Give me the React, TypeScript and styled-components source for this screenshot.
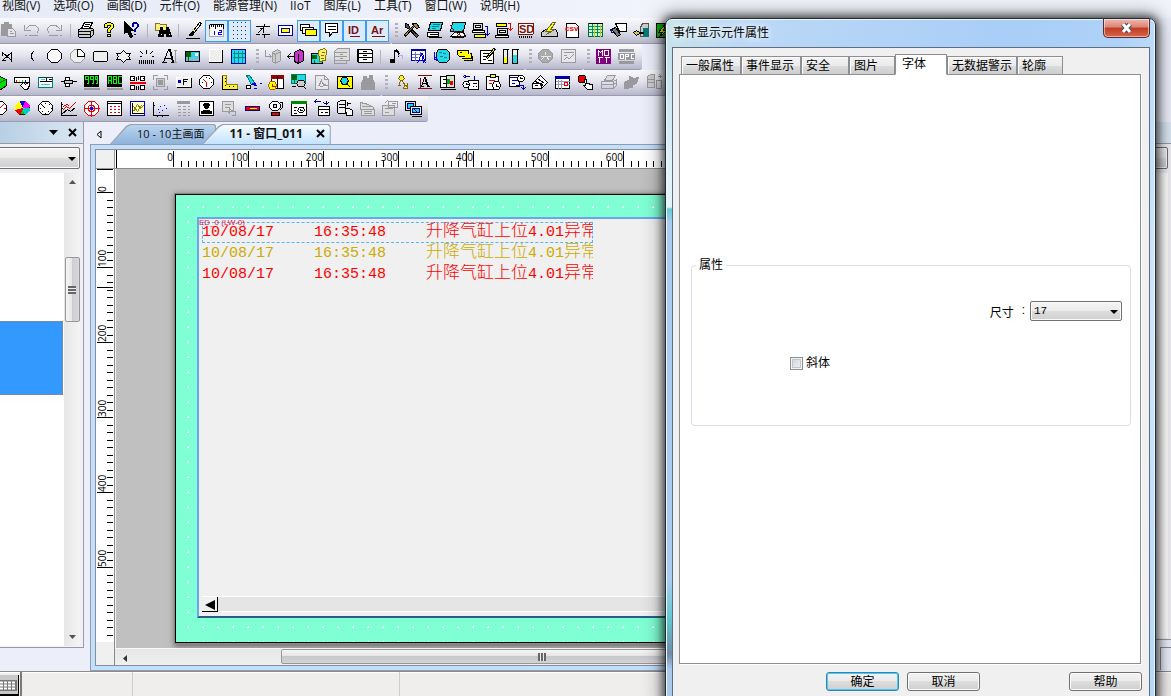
import React from "react";
import styled, { createGlobalStyle, css } from "styled-components";

const ui = `"Open Sans", "Noto Sans CJK SC", sans-serif`;
const dialogFont = `"Liberation Sans", "Noto Sans CJK SC", sans-serif`;

const Global = createGlobalStyle`
  *, *::before, *::after { box-sizing: border-box; }
  body { margin: 0; background: #eceffa; font-family: ${ui}; font-size: 12px; color: #111; }
  button, select, input { font: inherit; color: inherit; margin: 0; padding: 0; }
  button { border: 0; background: none; }
`;

/* ---------- icon drawing ---------- */

// path, fill, stroke (defaults to the fill), dash pattern
type Shape = [string, string, string?, string?];
// text, x, baseline, size, colour, weight
type Glyph = [string, number, number, number, string, number?];
interface Drawing { p: Shape[]; t?: Glyph[] }

const K = "#000";
const W = "#fff";
const G = "#9a9a9e";
const N = "none";
const Y = "#ff0";
const R = "#e00";
const C = "#1fd8e8";
const B = "#0000a8";
const T = "#007c7c";
const P = "#800080";
const D = "#7b1010";

const icons: Record<string, Drawing> = {
  paste: { p: [["M4 5h10v11H4z", G], ["M7 3h4v2H7z", G], ["M10 9h5l3 3v5h-8z", "#e4e4ea", G], ["M12 12h2M12 14h4", N, G]] },
  undo: { p: [["M4 5v6h6M5 10l3-3c4-3 10-1 10 4l-2 3M4 16h2M8 16h9", N, G]] },
  redo: { p: [["M18 5v6h-6M17 10l-3-3c-4-3-10-1-10 4l2 3M18 16h-2M14 16H5", N, G]] },
  print: { p: [["M7 9l3-6h8l-3 6z", W, K], ["M10 5h5M9 7h5", N, K], ["M4 10l3-1h11l1 1v5l-3 3H5l-1-1z", "#ccc", K], ["M4 12h12l3-2M4 15h12M16 12v5", N, K], ["M13 14h1", Y]] },
  help: { p: [["M7 8V5l3-2h3l3 2v3l-3 3v2h-3v-3l3-3V6h-3v2zM10 15h3v2h-3z", Y, K]] },
  context: { p: [["M4 2v12l3-2 3 6 2-1-3-6h4z", K], ["M12 7V4l2-1h2l2 2v2l-3 3v2M15 14v1", N, B], ["M13 7V4h4v3l-3 3v2M14 14v1", N, B]] },
  find: { p: [["M4 4h4l1 1h6v6H4z", "#fe6", "#774"], ["M6 6l2 2M10 6l2 2", N, W], ["M9 8h2v3h4V8h2l3 9h-5v-3h-3v3H7z", K], ["M9 15h1M17 15h1", N, W]] },
  pen: { p: [["M17 3l-6 8 1 2 7-9z", W, K], ["M11 11l-4 4v1h3l2-3z", K], ["M3 19h14", N, K], ["M10 10l3 3", N, "#cc0"]] },
  ruler: { p: [["M4 5h14v12H4z", W, "#aaa"], ["M4 5h14M4 5v4M6 5v2M8 5v2M10 5v4M12 5v2M14 5v2M16 5v2M18 5v4", N, K], ["M9 11v4M8 12h1M13 11h3v2h-3v2h3", N, "#00f"]] },
  dots: { p: [["M4 3h16M4 7h16M4 11h16M4 15h16M4 19h16", N, "#234", "1 3"]] },
  origin: { p: [["M4 7h14M13 4v3M13 15v3M4 15h4M10 15h8", N, K], ["M6 14l6-6M8 9h4v4", N, K]] },
  frame: { p: [["M4 6h14v10H4z", W, B], ["M7 9h8v4H7z", Y, B]] },
  layers: { p: [["M3 5h9v6H3z", W, K], ["M5 8h11v6H5z", "#ffc", K], ["M8 10h11v6H8z", Y, K]] },
  note: { p: [["M5 4h12v9h-5l-3 4v-4H5z", W, K], ["M7 7h8M7 10h8", N, K]] },
  idtag: { p: [["M6 17h10", N, D]], t: [["ID", 5, 15, 11, D, 700]] },
  artag: { p: [["M5 17h13", N, D]], t: [["Ar", 5, 15, 11, D, 700]] },
  tools: { p: [["M5 4l3 1 1 3 9 8-2 2-8-9-3-1z", "#555", K], ["M12 4h4l3 4-3 1-2-2-9 10-1-2 9-9z", "#a84", K]] },
  screen: { p: [["M7 3h12l-2 8H5z", C, K], ["M9 5h7M8 7h7M8 9h4", N, T], ["M4 13h11v4H4z", W, K], ["M5 18h13M6 15h8", N, K]] },
  offline: { p: [["M6 3h13l-2 9H4z", C, K], ["M8 13h9l2 4H4z", W, K], ["M4 6l4 6 9 6M16 11l-7 7", N, D], ["M5 18h12", N, K]] },
  upload: { p: [["M4 4h9v6H4z", "#ddd", K], ["M6 6h5v2H6z", W, K], ["M3 11h12v2H3z", W, K], ["M5 15h11v3H5z", Y, K], ["M15 7h3v9M16 14l2 2 2-2", N, "#00c"]] },
  download: { p: [["M4 4h10v3H4z", Y, K], ["M5 9h10v6H5z", "#ddd", K], ["M7 11h6v2H7z", W, K], ["M3 16h13v2H3z", W, K], ["M15 4h3v7M16 9l2 2 2-2", N, R]] },
  sdcard: { p: [["M3 4h15v10l-1 1H3z", W, D], ["M4 16v2M6 16v2M8 16v2M10 16v2M12 16v2M14 16v2M16 16v2", N, K]], t: [["SD", 4, 14, 11, D, 700]] },
  disk: { p: [["M3 13l4-3h10l2 3v4H3z", "#ccc", K], ["M14 3l-7 9h4l-3 3 8-5h-4l5-7z", Y, "#663"]] },
  csv: { p: [["M5 4h9l3 3v11H5z", W, K]], t: [["csv", 4, 12, 8, R, 700]] },
  datatable: { p: [["M4 4h14v13H4z", "#cff5d8", "#063"], ["M4 7h14M4 10h14M4 13h14M8 4v13M13 4v13", N, "#085"], ["M4 4h14", N, K], ["M10 5v12M16 5v12", N, "#cc0"]] },
  camera: { p: [["M8 4h11v8h-7z", W, K], ["M4 10l4-2 5 7-3 2z", "#777", K], ["M3 10l2 4", N, B]] },
  usb: { p: [["M12 4h6v13h-8v-9z", "#ccc", "#555"], ["M13 9h5v8h-5z", T], ["M3 13l3-2 3 2h4v1H9l-3 2z", "#cc4", K]] },
  export: { p: [["M3 4h15v14H3z", "#0b0", K], ["M12 4l-7 9h4l-3 4 8-6h-4z", Y, K]] },

  line: { p: [["M5 7l9 8M14 7l-9 8M5 7v3M14 6v10M5 15h3", N, K]] },
  arc: { p: [["M14 6c-4 1-4 8 0 9M13 7c-3 2-3 6 0 7", N, K]] },
  circle: { p: [["M8 4h6l4 4v5l-4 4H8l-4-4V8z", "#f8f8fa", K]] },
  pie: { p: [["M8 4h6l4 4v5l-4 4H8l-4-4V8z", "#eee", G], ["M11 4v7h7V8l-4-4z", W, K]] },
  rect: { p: [["M5 6h12l1 1v8l-1 1H5l-1-1V7z", "#eee", K]] },
  star: { p: [["M4 8h4l3-3 3 3h4l-2 3 2 3h-4l-3 3-3-3H4l2-3z", "#eee", K]] },
  scale: { p: [["M4 14v4M6 14v4M8 14v4M10 14v4M12 14v4M14 14v4M16 14v4M18 14v4M5 6l3 3M17 6l-3 3M11 4v4M4 11h2M16 11h2", N, K]] },
  text: { p: [["M10 4L5 17M11 4l3 13M12 4l3 13M7 13h6M3 17h5M12 17h4M9 4h3", N, K], ["M15 5h3M17 5v12M15 17h3", N, G]] },
  picture: { p: [["M4 6h14v10H4z", C, K], ["M5 12h12v3H5z", "#7bd", "#7bd"], ["M5 7h4v4H5zM7 8v7", "#060"], ["M14 8h2v2h-2z", W]] },
  button3d: { p: [["M5 4h12v12H5z", "#eee", W], ["M18 4v13H4", N, K]] },
  grid: { p: [["M4 4h14v14H4z", C, B], ["M7 5v12M11 5v12M15 5v12M5 8h12M5 12h12", N, "#088"]] },
  importlib: { p: [["M4 4v7h6M8 9l2 2-2 2", N, G], ["M11 7l5-3 3 2v9l-5 3-3-2z", "#ccc", G], ["M14 9v8M12 8l2 1 5-3", N, G]] },
  exportlib: { p: [["M10 7l5-3 4 2v9l-5 3-4-2z", "#c3c", K], ["M14 8v9M3 11h7M6 8l-3 3 3 3", N, K]] },
  piclib: { p: [["M4 8h11v10H4z", C, K], ["M5 10h4v3H5zM7 14v3", "#060"], ["M11 5l6-2 2 2-1 10-6 1z", "#fe6", "#770"], ["M14 7h3M13 10h3M13 13h3", N, "#770"]] },
  cabinetOff: { p: [["M7 3h12v12H4V6z", "#ddd", G], ["M4 7h12M4 11h12M4 15h12v3H4zM9 9h3M9 13h3", N, G]] },
  cabinet: { p: [["M4 4h13l2 1v12H5l-1-1z", W, K], ["M4 8h14M4 12h14M9 6h4M9 10h4M9 14h4M5 4v13", N, K]] },
  music: { p: [["M10 5v10M10 5l4 2v4", N, K], ["M6 14h4v3H6z", K], ["M13 10h5v3", N, "#aaf"], ["M11 5l3 3h1l-3-4z", K]] },
  gridtext: { p: [["M4 4h14v11H4z", W, B], ["M4 5h14", N, B], ["M4 9h8M4 12h6M8 6v9M13 6v3", N, "#66b"], ["M14 8l-4 10M14 8l2 10M15 8l3 10M12 15h5", N, "#00c"]] },
  calls: { p: [["M8 4h8l3 3v7l-3 3H9l-3-3V7z", C, K], ["M8 7h3M12 8h3M9 11h3M13 12h3", N, T], ["M4 6v8h3M5 12l2 2-2 2", N, "#00f"]] },
  tags: { p: [["M4 5h11v6H6L4 9z", Y, K], ["M8 13h10V8h-2M10 15h9v-5", Y, K], ["M6 7h2", K]] },
  edit: { p: [["M4 5h13v13H4z", W, K], ["M6 8h8M6 11h4M6 14h3M11 15h4", N, K], ["M17 3l-7 9 1 1 8-9z", Y, K]] },
  tubes: { p: [["M4 4v14h4V4zM13 4v14h5V4z", "#e8f4f4", K], ["M5 12h2v5H5z", Y], ["M14 10h3v7h-3z", C], ["M3 4h6M12 4h7", N, K]] },
  disc: { p: [["M8 4h6l4 4v5l-4 4H8l-4-4V8z", "#aaa", G], ["M6 11h10M10 11l-4 4M12 11l3 4M11 6v3", N, "#e8e8ee"]] },
  trend: { p: [["M4 4h14v13H4z", "#e6e6ec", G], ["M6 7h10M6 10h3M6 15l3-3 3 1 4-4", N, G]] },
  mqtt: { p: [["M4 4h14v14H4z", P], ["M6 10V5l2 2 2-2v5M12 5h4v5h-4zM5 12h5M7 12v5M12 12h5M14 12v5", N, W]] },
  opc: { p: [["M4 4h14v2H4zM4 16h14v2H4z", G], ["M3 8h16v6H3z", G], ["M5 9h3v4H5zM10 14V9h3v2h-3M18 9h-2v4h2", N, W]] },

  cube: { p: [["M4 8l7-3 7 3v6l-7 5-7-5z", "#0d0", K], ["M4 8l7 3 7-3M11 11v7", N, "#060"]] },
  palette: { p: [["M3 6h15v5H3z", W, K], ["M5 8v2", N, R], ["M8 8v2", N, "#fd0"], ["M11 8v2", N, "#0c0"], ["M14 8v2", N, "#00f"], ["M9 14l3-3 2 2 4-3v4l-2 4h-3z", W, K]] },
  combo: { p: [["M4 6h14v10H4z", W, T], ["M4 6h14", N, "#044"], ["M12 6v4M14 8h3M5 10h12", N, K], ["M6 8h4M6 13h9", N, C]] },
  slider: { p: [["M3 10h5M14 10h5", N, K], ["M8 6h4v9H8z", W, K], ["M7 9h8v3H7z", "#ccc", K]] },
  numeric: { p: [["M4 17h15v1H4z", "#eee", G], ["M4 4h14v11H4z", K], ["M8 8H5V5h3v7H6M13 8h-3V5h3v7h-2M17 8h-2V5h2v7h-2", N, "#0f0"]] },
  ascii: { p: [["M4 17h15v1H4z", "#eee", G], ["M4 4h14v11H4z", K], ["M5 12V5h3v7M5 9h3M10 12V5h3v7h-3M10 8h3M18 5h-3v7h3", N, "#0f0"]] },
  barcode: { p: [["M4 5h4v4H4zM14 5h4v4h-4zM4 14h4v4H4zM14 14h4v4h-4z", W, K], ["M10 5v4M12 4v4M10 14v4M12 14v4M6 7h1M16 7h1", N, K], ["M3 11h16", N, R], ["M3 12h16", N, R]] },
  focus: { p: [["M4 8V4h4M14 4h4v4M18 14v4h-4M8 18H4v-4", N, G], ["M7 7h8v8H7z", "#ccc", G], ["M9 9h4v4H9z", G]] },
  fkey: { p: [["M4 6h14v9H4z", "#eee", W], ["M19 6v10H4", N, K], ["M6 9h2v2H6z", "#00a"], ["M11 13V8h4M11 10h3", N, K]] },
  meter: { p: [["M8 4h6l4 4v5l-4 4H8l-4-4V8z", W, K], ["M11 5v1M6 11h1M15 11h1M14 7l1 1", N, K], ["M8 8l3 3v4", N, R]] },
  bargraph: { p: [["M4 4h4v9h11v5H4z", "#fe3", "#880"], ["M4 4v14h15", N, K], ["M6 7h1M6 10h1M6 14h1M10 15h1M14 15h1", N, K]] },
  brush: { p: [["M5 4h3l5 7-3 2z", C, T], ["M10 13l3-2 2 3z", "#00c"], ["M5 14h4v3H5z", W, K], ["M12 17h3M18 12h2", N, "#00f"]] },
  history: { p: [["M7 4h12v13H7z", W, K], ["M7 4h12v3H7z", "#900"], ["M13 4v13", N, K], ["M6 10h4l2 3v2l-2 3H6l-2-3v-2z", Y, "#a60"], ["M8 12v3h3", N, R]] },
  picview: { p: [["M4 3h14v9H4z", C, T], ["M5 4h4v4H5zM7 8v4", "#060"], ["M11 9h5l2 3-2 3h-5l-2-3z", "#ccc", K], ["M16 15l3 3M4 15h4", N, K]] },
  pdf: { p: [["M5 4h9l4 4v10H5zM14 4v4h4", "#e8e8ee", G], ["M8 15l3-6 1 3 4 2-6 1", N, G]] },
  magnify: { p: [["M4 5h15v12H4z", Y, K], ["M9 6h4l2 3-2 4H9L7 9z", C, K], ["M13 12l4 4", N, K]] },
  building: { p: [["M5 18v-7l2-3V5h3v2h3V4h3v4l2 3v7z", G]] },
  key: { p: [["M10 4h2l2 3-2 2h-2L8 7z", "#fe3", "#660"], ["M10 9l-2 6M7 14h3", N, "#860"], ["M11 9l5 6 1-3v5h-4l1-3", "#fe3", "#860"]] },
  fontA: { p: [["M4 4h14M4 17h14M7 6v10", N, D], ["M11 6l-3 9M12 6l3 9M11 6l3 9M9 12h5M7 15h3M13 15h3", N, K]] },
  layout: { p: [["M4 5h12v11H4z", W, K], ["M10 4h8v12h-8z", "#ddd", K], ["M6 8h3M6 12h3M4 18h15", N, K], ["M11 8h2v4h-2z", "#0a0"], ["M14 10h2v3h-2z", R]] },
  schedule: { p: [["M9 9h10v9H9z", W, K], ["M5 10h4l1 3-1 3H5l-2-3zM7 11v2h2", W, K], ["M5 5h5M15 4v4M7 3L4 5l3 2", N, "#009"], ["M13 12h4M13 15h1M16 15h1", N, K]] },
  clipboard: { p: [["M4 5h12v13H4z", W, K], ["M8 3h5v3H8z", Y, K], ["M6 9h6M6 12h3", N, R], ["M12 10h4l2 3v2l-2 3h-4l-2-3v-2zM14 12v3h2", W, K]] },
  timer: { p: [["M4 4h10v11H4z", W, K], ["M4 6h10M6 9h6M6 12h3", N, B], ["M13 4h4l2 2v2l-2 2h-4l-1-3zM15 5v2h2", W, K], ["M10 14h8v4M16 16l2 2 2-2", N, B]] },
  mail: { p: [["M4 12l8-8 7 7-6 6H4z", W, K], ["M7 10l8 4M9 7l7 5M4 12h9v5M6 14h3", N, K], ["M11 14h1", R]] },
  calendar: { p: [["M4 5h14v12H4z", W, K], ["M4 5h14v2H4z", B], ["M4 10h14M4 13h14M7 8v9M10 8v9", N, "#99b"], ["M13 11h3v3h-3z", W, R]] },
  touch: { p: [["M5 4h5l1 1v5l-1 1H5l-1-1V5z", R, K], ["M10 8h2v4l6 1v5h-5l-4-4h2z", W, K]] },
  printOff: { p: [["M7 9l3-5h8l-3 5z", "#ddd", G], ["M4 10h12l3-2v6l-3 3H4zM4 13h12l3-2M16 10v7", N, G]] },
  plug: { p: [["M4 11l5-3V5l5 2 4-1-2 6-4 1v3l-8 1z", G]] },
  serverOff: { p: [["M4 5l3-2h4v13H4z", "#ccc", G], ["M4 8h7M4 11h7M13 9h5v8h-5zM14 5h4M16 3l2 2-2 2", N, G]] },
  disc2: { p: [["M4 5h13v12H4zM6 8h8M6 11h8", "#ccc", G]] },

  gauge: { p: [["M8 4h6l4 4v5l-4 4H8l-4-4V8z", W, K], ["M11 11l4-4M15 11h2", N, R]] },
  pie2: { p: [["M8 4h6l4 4v5l-4 4H8l-4-4V8z", "#0c0", K], ["M11 11L8 4h6z", "#00f"], ["M11 11l3-7 4 4-1 3z", "#f0f"], ["M11 11h7v2l-4 4z", "#0cc"], ["M11 11l-7 1V8l4-4z", "#ff0"], ["M11 11l-3 6-4-4z", R]] },
  clock: { p: [["M8 4h6l4 4v5l-4 4H8l-4-4V8z", W, K], ["M7 7l4 4M11 5v1M11 15v1M5 11h1M16 11h1M15 7l-1 1M7 15l1-1M15 15l-1-1", N, K]] },
  linechart: { p: [["M4 4v14h15M3 7h2M3 11h2", N, K], ["M5 13l4-4 3 2 6-6M6 9l3-2 3 1", N, R], ["M5 16l5-4 3 2 5-4", N, K]] },
  target: { p: [["M8 4h6l4 4v6l-4 4H8l-4-4V8z", W, R], ["M9 8h4l1 2v3l-2 1H9l-1-2V9z", W, R], ["M11 3v16M3 11h16", N, R], ["M10 10h2v2h-2z", "#00f"]] },
  datagrid: { p: [["M4 4h14v14H4z", W, K], ["M4 6h14", N, K], ["M6 9h10M6 12h10M6 15h10", N, R, "2 2"]] },
  xychart: { p: [["M4 4h14v14H4z", "#ffc", "#00c"], ["M6 5v11h11", N, K], ["M7 14l4-7 3 4 3-3M7 9l4 5 4-6", N, "#880"]] },
  scatter: { p: [["M4 4v14h15M3 8h2M8 17v2M13 17v2", N, K], ["M8 12h1M10 9h1M12 13h1M14 8h1M16 11h1M9 15h1", N, "#00f"]] },
  tableOff: { p: [["M5 4h12v2H5zM5 9h3M10 9h3M15 9h2M5 12h3M10 12h3M15 12h2M5 15h3M10 15h3M15 15h2M5 18h3M10 18h3M15 18h2", G]] },
  user: { p: [["M4 4h14v14H4z", W, K], ["M9 6h4l1 2-2 3h-2L8 8z", K], ["M6 16v-2l3-1h4l3 1v2z", K]] },
  handOff: { p: [["M4 4h11v10H4z", "#ddd", G], ["M6 7h6M6 10h4M11 9v7l-2-2M11 12l6 2v4h-4", N, G]] },
  alarmbar: { p: [["M4 9h14v4H4z", R, "#008"], ["M8 11h7", N, Y], ["M5 6l1 1M17 6l-1 1M5 16h1M17 16h-1", N, "#fbb"]] },
  bell: { p: [["M8 4h5l3 3v3l-3 3H8l-3-3V7z", W, K], ["M9 7h3v3H9z", "#ccc", K], ["M15 5h3v5l-3 3", N, K], ["M7 15h8v3H7z", R, K]] },
  eventlog: { p: [["M4 4h15v14H4z", W, K], ["M4 4h15v2H4z", "#080"], ["M6 10h3M6 13h2M6 16h3", N, K], ["M12 10h4l1 3-2 2h-3l-2-2zM13 11v2h2", N, K]] },
  transfer: { p: [["M8 9h11v9H8z", W, K], ["M8 12h11M10 15h2M14 15h3", N, K], ["M4 4h6M4 4l2-2M4 4l2 2M16 3v4l2-2M16 7l-3-2", N, "#009"]] },
  server: { p: [["M4 5l3-2h5v13H5l-1-1z", "#eee", K], ["M5 7h6M5 10h6M14 4v4M13 6h4", N, K], ["M12 11h4l3 2v5h-6z", W, K]] },
  logOff: { p: [["M4 5l8 2 5 3v2H4zM5 12h13v6H5z", "#ddd", G], ["M5 9h10M7 14h8M7 16h8", N, G]] },
  filesOff: { p: [["M3 8h12v10H3z", "#ddd", G], ["M9 4h9v6H9zM5 6l3-3M5 11h8M12 6h4M5 15h4", N, G]] },
  monitors: { p: [["M3 4h10v9H3z", "#ddd", K], ["M5 6h6v5H5z", C, "#00a"], ["M8 9h11v8H8z", "#eee", K], ["M10 11h7v4h-7z", C, "#00a"], ["M12 12l3 3M9 19h10", N, K]] },
};

const IconSvg = styled.svg`
  display: block;
  shape-rendering: crispEdges;
  font-family: "Liberation Sans", sans-serif;
`;

const Icon = ({ name }: { name: string }) => (
  <IconSvg width="23" height="22" viewBox="0 1 23 22" aria-hidden="true">
    <g transform="translate(.5 .5)">
      {icons[name].p.map(([d, fill, stroke, dash], i) => (
        <path key={i} d={d} fill={fill} stroke={stroke ?? fill} strokeDasharray={dash} />
      ))}
    </g>
    {icons[name].t?.map(([s, x, y, size, fill, weight]) => (
      <text key={s} x={x} y={y} fontSize={size} fill={fill} fontWeight={weight}>{s}</text>
    ))}
  </IconSvg>
);

/* ---------- menu and toolbars ---------- */

const Page = styled.div`
  position: relative;
  display: flex;
  flex-direction: column;
  height: 100vh;
  overflow: hidden;
`;

const MenuBar = styled.nav`
  display: flex;
  flex: none;
  gap: 13px;
  height: 18px;
  padding-left: 2px;
  background: linear-gradient(90deg, #e6ebf8, #f2f4fc 60%);
`;

const MenuItem = styled.button`
  height: 12px;
  line-height: 12px;
  white-space: nowrap;
`;

const ToolRow = styled.div`
  display: flex;
  flex: none;
  height: 26px;
`;

const ToolStrip = styled.div<{ $first?: boolean; $shift?: number }>`
  display: flex;
  height: 26px;
  padding: 2px 4px 0 0;
  ${(p) => p.$first && css`padding-right: 3px; & > :first-child { margin-left: -${p.$shift}px; }`}
  background: linear-gradient(#fafafd, #e4e5ee 45%, #b7b7cb);
  border-bottom: 1px solid #9a9ab0;
  border-radius: 0 2px 3px 0;
`;

const Tool = styled.button<{ $on?: boolean }>`
  flex: none;
  width: 23px;
  height: 22px;
  ${(p) => p.$on && css`background: #dcebfb; box-shadow: inset 0 0 0 1px #3c9cf0;`}
`;

const Divider = styled.span`
  flex: none;
  width: 1px;
  height: 14px;
  margin: 4px 3px 0 4px;
  background: #b4b4c0;
`;

const Grip = styled.span`
  flex: none;
  width: 3px;
  height: 16px;
  margin: 3px 2px 0 3px;
  background: repeating-linear-gradient(#b0b0ba 0 2px, transparent 2px 4px);
`;

const Strip = ({ items, shift, on = "" }: { items: string; shift?: number; on?: string }) => (
  <ToolStrip $first={shift !== undefined} $shift={shift}>
    {shift === undefined && <Grip />}
    {items.split(" ").map((n, i) =>
      n === "|" ? <Divider key={i} /> : (
        <Tool key={i} aria-label={n} $on={on.split(" ").includes(n)}><Icon name={n} /></Tool>
      ))}
  </ToolStrip>
);

/* ---------- left and right docks ---------- */

const Workspace = styled.div`
  display: flex;
  flex: 1;
  min-height: 0;
`;

const Dock = styled.aside<{ $right?: boolean }>`
  display: flex;
  flex-direction: column;
  flex: none;
  width: ${(p) => (p.$right ? "60px" : "84px")};
  margin: ${(p) => (p.$right ? "0 0 31px 6px" : "0 6px 23px 0")};
  border-right: ${(p) => (p.$right ? "0" : "1px solid #9a9aa6")};
  border-bottom: 1px solid #9a9aa6;
`;

const DockHead = styled.div`
  display: flex;
  flex: none;
  align-items: center;
  justify-content: flex-end;
  gap: 10px;
  height: 22px;
  padding: 0 6px 0 0;
  border-bottom: 1px solid #9a9aa6;
  background: linear-gradient(90deg, #b8cfe4, #dbe7f3);
`;

const DockBody = styled.div`
  display: flex;
  flex: 1;
  flex-direction: column;
  gap: 4px;
  min-height: 0;
  padding: 3px 3px 1px 0;
  background: #f0f0f4;
`;

const SelectBox = styled.div<{ $height: number; $wide?: boolean }>`
  position: relative;
  flex: none;
  width: ${(p) => (p.$wide ? "auto" : "92px")};
  height: ${(p) => p.$height}px;
  margin-left: ${(p) => (p.$wide ? "-2px" : "0")};
  select {
    width: 100%;
    height: 100%;
    padding-left: 3px;
    appearance: none;
    border: 1px solid #707070;
    border-radius: 2px;
    background: linear-gradient(#f4f4f4, #ebebeb 48%, #dddddd 50%, #cfcfcf);
    box-shadow: inset 0 0 0 1px #fbfbfb;
    font-family: "Liberation Mono", monospace;
    font-size: 11px;
  }
  svg {
    position: absolute;
    right: 4px;
    top: 50%;
    margin-top: -1px;
    pointer-events: none;
  }
`;

const DownArrow = () => (
  <svg width="8" height="4" viewBox="0 0 8 4" aria-hidden="true"><path d="M0 0h8L4 4z" /></svg>
);

const ListArea = styled.div`
  display: flex;
  flex: 1;
  min-height: 0;
  background: #fff;
`;

const ListItems = styled.div`
  flex: 1;
  padding-top: 148px;
`;

const SelectedItem = styled.div`
  height: 74px;
  margin-right: 1px;
  background: #3399ff;
  border: 1px dotted #b87850;
  border-left: 0;
`;

const VScroll = styled.div`
  display: flex;
  flex-direction: column;
  align-items: center;
  width: 16px;
  padding: 7px 0;
  background: linear-gradient(90deg, #e6e6e6, #f4f4f4);
`;

const VThumb = styled.div`
  display: flex;
  align-items: center;
  justify-content: center;
  width: 15px;
  height: 65px;
  margin: 73px 0 auto;
  border: 1px solid #979797;
  border-radius: 2px;
  background: linear-gradient(90deg, #f6f6f6, #e6e6e8 45%, #cdcdd2 50%, #d8d8dc);
`;

const GripLines = styled.span<{ $vertical?: boolean }>`
  width: 8px;
  height: 8px;
  background: repeating-linear-gradient(${(p) => (p.$vertical ? "90deg" : "180deg")}, #666 0 2px, #eee 2px 3px);
`;

/* ---------- document area ---------- */

const DocArea = styled.main`
  display: flex;
  flex: 1;
  flex-direction: column;
  min-width: 0;
`;

const TabRow = styled.div`
  display: flex;
  flex: none;
  align-items: flex-end;
  height: 22px;
  padding-left: 6px;
`;

const TabScroll = styled.button`
  width: 14px;
  height: 20px;
  text-align: left;
`;

const slant = "polygon(0 100%, 16px 2px, 20px 0, calc(100% - 2px) 0, 100% 2px, 100% 100%)";

const DocTab = styled.button<{ $active?: boolean }>`
  position: relative;
  display: flex;
  align-items: center;
  gap: 13px;
  height: 20px;
  margin-left: ${(p) => (p.$active ? "-14px" : "0")};
  padding: 0 ${(p) => (p.$active ? "6px" : "12px")} 2px 27px;
  font-size: ${(p) => (p.$active ? "12px" : "11px")};
  font-weight: ${(p) => (p.$active ? 700 : 400)};
  white-space: nowrap;
  isolation: isolate;
  &::before, &::after {
    content: "";
    position: absolute;
    z-index: -1;
    inset: 0;
    background: #9aa0ac;
    clip-path: ${slant};
  }
  &::after {
    inset: 1px 1px 0 1px;
    background: ${(p) => (p.$active ? "linear-gradient(#f4fbff, #c3e3ff)" : "linear-gradient(#b9d4ef, #8fb3da)")};
  }
`;

const DocFrame = styled.div`
  display: grid;
  flex: 1;
  grid-template: 19px 1fr 17px / 19px 1fr;
  min-height: 0;
  border: 1px solid #9a9aa6;
  box-shadow: inset 0 0 0 4px #bfe0ff, inset 0 0 0 5px #8c8c94;
  padding: 5px;
`;

const Corner = styled.div`
  background: #f0f0f0;
  border-right: 1px solid #999;
  border-bottom: 1px solid #999;
`;

const RulerBox = styled.div<{ $vertical?: boolean }>`
  min-width: 0;
  min-height: 0;
  overflow: hidden;
  background: #fff;
  border-${(p) => (p.$vertical ? "right" : "bottom")}: 1px solid #8a8a8a;
  svg { display: block; shape-rendering: crispEdges; font-family: "Open Sans", sans-serif; font-size: 10px; }
  ${(p) => p.$vertical && css`
    grid-row: 2 / 4;
    background: linear-gradient(#fff 473px, #f0f0f0 473px);
  `}
`;

const HorizontalRuler = () => (
  <RulerBox>
    <svg width="1000" height="18">
      <path d="M1.5 0v18M351.5 1v16" stroke="#000" />
      {Array.from({ length: 110 }, (_, i) => {
        const x = 58 + Math.round(i * 7.5);
        const major = i % 10 === 0;
        return (
          <g key={i}>
            <path d={`M${x}.5 ${major ? 1 : 11}v${major ? 16 : 6}`} stroke="#000" />
            {major && <text x={x} y="11" textAnchor="end">{i * 10}</text>}
          </g>
        );
      })}
    </svg>
  </RulerBox>
);

const VerticalRuler = () => (
  <RulerBox $vertical>
    <svg width="18" height="473">
      <path d="M1 .5h16M1 118.5h16" stroke="#000" />
      {Array.from({ length: 60 }, (_, i) => {
        const y = 23 + Math.round(i * 7.5);
        const major = i % 10 === 0;
        return (
          <g key={i}>
            <path d={`M${major ? 1 : 11} ${y}.5h${major ? 16 : 6}`} stroke="#000" />
            {major && <text transform={`translate(10 ${y}) rotate(-90)`}>{i * 10}</text>}
          </g>
        );
      })}
    </svg>
  </RulerBox>
);

const Canvas = styled.div`
  display: flex;
  min-width: 0;
  min-height: 0;
  overflow: hidden;
  padding: 25px 0 5px 59px;
  border-left: 1px solid #f4f4f4;
  background: #c0c0c0;
`;

const Artboard = styled.div`
  display: flex;
  flex: 1;
  padding: 22px 0 24px 21px;
  border: 1px solid #000;
  border-right: 0;
  box-shadow: 0 0 0 1px #8a8a8a, 1px 2px 6px 2px #707070;
  background: radial-gradient(#fff 1px, transparent 1px) 5px 5px / 15px 15px #80ffd4;
`;

const EventDisplay = styled.section`
  display: flex;
  flex: 1;
  flex-direction: column;
  justify-content: space-between;
  min-width: 0;
  padding: 3px 0 4px 3px;
  border: solid #6aa5f0;
  border-width: 2px 0 2px 2px;
  border-bottom-color: #2b5c86;
  background: #f0f0f0;
`;

const EventTag = styled.span`
  position: absolute;
  margin: -4px 0 0 -3px;
  color: #e0104c;
  font: 8px/10px "Liberation Sans", sans-serif;
`;

const EventTable = styled.table`
  width: 391px;
  border-collapse: collapse;
  table-layout: fixed;
  font-family: "Liberation Mono", monospace;
  font-size: 15px;
  line-height: 20px;
`;

const EventRow = styled.tr<{ $color: string; $current?: boolean }>`
  height: 21px;
  color: ${(p) => p.$color};
  ${(p) => p.$current && css`outline: 1px dashed #58b4f4; outline-offset: -1px;`}
  td { width: 112px; height: 21px; padding: 0; line-height: 18px; white-space: nowrap; overflow: hidden; }
  td:last-child { width: auto; }
`;

const Han = styled.span`
  font-family: "Noto Sans CJK SC", sans-serif;
  font-size: 17px;
  font-weight: 300;
  line-height: 10px;
`;

const EventScroll = styled.div`
  display: flex;
  height: 16px;
  border: solid #fff;
  border-width: 1px 0;
  background: #e5e5e5;
`;

const EventScrollButton = styled.button`
  width: 16px;
  height: 15px;
  background: #f0f0f0;
  box-shadow: inset -1px -1px #000;
`;

const HScroll = styled.div`
  display: flex;
  min-width: 0;
  overflow: hidden;
  padding: 0 1px;
  border-top: 1px solid #f8f8f8;
  background: linear-gradient(#e6e6e6, #f0f0f0);
`;

const HScrollButton = styled.button`
  width: 17px;
  height: 16px;
`;

const HThumb = styled.div`
  display: flex;
  flex: none;
  align-items: center;
  justify-content: center;
  width: 522px;
  margin-left: 148px;
  height: 15px;
  border: 1px solid #979797;
  border-radius: 2px;
  background: linear-gradient(#f6f6f6, #e4e4e6 48%, #c8c8cc 50%, #d4d4d8);
`;

const StatusBar = styled.footer`
  display: flex;
  flex: none;
  height: 25px;
  border-top: 1px solid #8c8c8c;
  box-shadow: inset 0 1px #fff;
  background: #f0eded;
`;

const StatusCell = styled.div<{ $width: number; $dark?: boolean }>`
  width: ${(p) => p.$width}px;
  padding-top: 3px;
  border-right: ${(p) => (p.$dark ? "2px solid #7a7a7a" : "1px solid #d0cccc")};
`;

const DockTab = styled.div`
  position: absolute;
  right: 0;
  bottom: 26px;
  width: 11px;
  height: 23px;
  border: solid #8a8a96;
  border-width: 1px 0 0 1px;
`;

/* ---------- dialog ---------- */

const Dialog = styled.section`
  position: absolute;
  top: 18px;
  right: 15px;
  bottom: -12px;
  display: flex;
  flex-direction: column;
  width: 491px;
  padding: 0 5px 8px 6px;
  border: 1px solid #1d2a38;
  border-radius: 7px;
  background:
    linear-gradient(transparent 45px, #e2f4fa 160px, #e2f4fa 188px, #63ccd4 190px, #a9cdf2 204px, #a9cdf2 560px, #5fc8d0 600px, #708ba8 635px, #a9c8ec 650px) 0 0 / 6px 100% no-repeat,
    linear-gradient(100deg, #c7e4e8, #bcd9f6 12%, #a9cef7 55%, #aed2f7 75%, #d0e5fa 88%, #b4d7fb);
  box-shadow: inset 0 0 0 1px #eef8ff, 0 0 9px 2px rgba(0, 0, 0, 0.65), 0 0 20px 4px rgba(0, 0, 0, 0.35);
  font-family: ${dialogFont};
  color: #000;
`;

const TitleBar = styled.header`
  display: flex;
  flex: none;
  justify-content: space-between;
  height: 28px;
`;

const Title = styled.h1`
  margin: 0;
  padding: 5px 0 0 1px;
  font: 400 12px/18px ${dialogFont};
  text-shadow: 0 0 6px #fff, 0 0 10px #fff;
`;

const CloseButton = styled.button`
  display: grid;
  place-items: center;
  width: 47px;
  height: 19px;
  border: 1px solid #5b2a2a;
  border-top: 0;
  border-radius: 0 0 5px 5px;
  background: linear-gradient(#eeb9ae, #dc8474 45%, #c23c22 50%, #d5674b);
  box-shadow: inset 0 0 0 1px rgba(255, 255, 255, 0.5);
`;

const Client = styled.div`
  display: flex;
  flex: 1;
  flex-direction: column;
  padding: 6px 8px 0 6px;
  border: 1px solid #5e6e80;
  background: #f0f0f0;
`;

const DialogTabs = styled.div`
  display: flex;
  align-items: flex-end;
  height: 21px;
  margin-bottom: -1px;
  padding-left: 2px;
`;

const DialogTab = styled.button<{ $width: number; $active?: boolean }>`
  position: relative;
  width: ${(p) => p.$width}px;
  height: ${(p) => (p.$active ? "21px" : "19px")};
  padding: ${(p) => (p.$active ? "0 0 2px 6px" : "1px 0 0 4px")};
  border: 1px solid #8c8e94;
  border-bottom-color: ${(p) => (p.$active ? "#fff" : "#8c8e94")};
  background: ${(p) => (p.$active ? "#fff" : "linear-gradient(#f3f3f3, #ebebeb 50%, #dddddd 51%, #cdcdcd)")};
  box-shadow: inset 1px 1px #fcfcfc;
  text-align: left;
  line-height: 16px;
  white-space: nowrap;
`;

const TabPage = styled.div`
  flex: 1;
  padding: 181px 9px 0 11px;
  border: 1px solid #8c8e94;
  background: #fff;
  box-shadow: 1px 1px #fff;
`;

const Group = styled.fieldset`
  height: 170px;
  margin: 0;
  padding: 27px 8px 0;
  border: 1px solid #d5dfe5;
  border-radius: 4px;
  legend { margin-left: -4px; padding: 0 3px; line-height: 18px; }
`;

const SizeRow = styled.div`
  display: flex;
  align-items: center;
  justify-content: flex-end;
  gap: 5px;
  label { display: flex; gap: 8px; }
`;

const ItalicRow = styled.label`
  display: flex;
  align-items: center;
  gap: 3px;
  width: max-content;
  margin: 33px 0 0 90px;
  line-height: 18px;
  input {
    appearance: none;
    width: 13px;
    height: 13px;
    border: 1px solid #8e8f8f;
    background: linear-gradient(135deg, #cfd3da, #f4f4f4);
    box-shadow: inset 0 0 0 1px #f4f4f4, inset 0 0 0 2px #c0c4cc;
  }
`;

const Actions = styled.div`
  display: flex;
  gap: 8px;
  height: 34px;
  padding: 8px 0 0;
  justify-content: flex-end;
`;

const PushButton = styled.button<{ $primary?: boolean; $last?: boolean }>`
  width: 73px;
  height: 19px;
  margin-left: ${(p) => (p.$last ? "81px" : "0")};
  margin-right: ${(p) => (p.$last ? "-1px" : "0")};
  border: 1px solid ${(p) => (p.$primary ? "#3c7fb1" : "#707070")};
  border-radius: 3px;
  background: linear-gradient(#f3f3f3, #ebebeb 48%, #dddddd 50%, #cfcfcf);
  box-shadow: inset 0 0 0 1px ${(p) => (p.$primary ? "#46cdf4" : "#fcfcfc")};
  line-height: 16px;
`;

const menus = ["视图(V)", "选项(O)", "画图(D)", "元件(O)", "能源管理(N)", "IIoT", "图库(L)", "工具(T)", "窗口(W)", "说明(H)"];

const events = [
  { color: "#f00", current: true },
  { color: "#ccaa00" },
  { color: "#f00" },
];

const tabs: [string, number][] = [
  ["一般属性", 60], ["事件显示", 60], ["安全", 48], ["图片", 46], ["字体", 52], ["无数据警示", 70], ["轮廓", 46],
];

export default function App() {
  return (
    <Page>
      <Global />
      <MenuBar>{menus.map((m) => <MenuItem key={m}>{m}</MenuItem>)}</MenuBar>
      <ToolRow>
        <Strip shift={3} on="ruler dots layers note idtag artag" items="paste undo redo | print help context | find | pen ruler dots origin frame layers note idtag artag" />
        <Strip items="tools screen offline upload download sdcard disk csv datatable camera usb export" />
      </ToolRow>
      <ToolRow>
        <Strip shift={3} items="line arc circle pie rect star scale text picture button3d grid" />
        <Strip items="importlib exportlib piclib cabinetOff cabinet | music gridtext calls tags edit tubes" />
        <Strip items="disc trend" />
        <Strip items="mqtt opc" />
      </ToolRow>
      <ToolRow>
        <Strip shift={12} items="cube palette combo slider numeric ascii barcode focus fkey meter bargraph brush history picview pdf magnify building" />
        <Strip items="key fontA layout schedule clipboard timer mail calendar touch printOff plug serverOff disc2" />
      </ToolRow>
      <ToolRow>
        <Strip shift={12} items="gauge pie2 clock linechart target datagrid xychart scatter tableOff user handOff alarmbar bell eventlog transfer server logOff filesOff monitors" />
      </ToolRow>

      <Workspace>
        <Dock>
          <DockHead>
            <svg width="9" height="5" viewBox="0 0 9 5" aria-hidden="true"><path d="M0 0h9L4.5 5z" /></svg>
            <svg width="9" height="9" viewBox="0 0 9 9" aria-hidden="true"><path d="M1 1l7 7M8 1L1 8" stroke="#000" strokeWidth="2" /></svg>
          </DockHead>
          <DockBody>
            <SelectBox $height={22} $wide>
              <select aria-label="窗口"><option> </option></select>
              <DownArrow />
            </SelectBox>
            <ListArea>
              <ListItems><SelectedItem /></ListItems>
              <VScroll>
                <svg width="7" height="4" viewBox="0 0 7 4" aria-hidden="true"><path d="M0 4L3.5 0 7 4z" fill="#555" /></svg>
                <VThumb><GripLines /></VThumb>
                <svg width="7" height="4" viewBox="0 0 7 4" aria-hidden="true"><path d="M0 0h7L3.5 4z" fill="#555" /></svg>
              </VScroll>
            </ListArea>
          </DockBody>
        </Dock>

        <DocArea>
          <TabRow>
            <TabScroll aria-label="上一个">
              <svg width="6" height="9" viewBox="0 0 6 9" aria-hidden="true"><path d="M5 1v7L1 4.5z" fill="#fff" stroke="#000" /></svg>
            </TabScroll>
            <DocTab>10 - 10主画面</DocTab>
            <DocTab $active>
              11 - 窗口_011
              <svg width="9" height="9" viewBox="0 0 9 9" aria-hidden="true"><path d="M1 1l7 7M8 1L1 8" stroke="#000" strokeWidth="2" /></svg>
            </DocTab>
          </TabRow>
          <DocFrame>
            <Corner />
            <HorizontalRuler />
            <VerticalRuler />
            <Canvas>
              <Artboard>
                <EventDisplay>
                  <EventTag>ED_0 (LW-0)</EventTag>
                  <EventTable>
                    <tbody>
                      {events.map((e, i) => (
                        <EventRow key={i} $color={e.color} $current={e.current}>
                          <td>10/08/17</td>
                          <td>16:35:48</td>
                          <td><Han>升降气缸上位</Han>4.01<Han>异常</Han></td>
                        </EventRow>
                      ))}
                    </tbody>
                  </EventTable>
                  <EventScroll>
                    <EventScrollButton aria-label="向左">
                      <svg width="10" height="10" viewBox="0 0 10 10" aria-hidden="true"><path d="M10 0v10L0 5z" /></svg>
                    </EventScrollButton>
                  </EventScroll>
                </EventDisplay>
              </Artboard>
            </Canvas>
            <HScroll>
              <HScrollButton aria-label="向左滚动">
                <svg width="4" height="7" viewBox="0 0 4 7" aria-hidden="true"><path d="M4 0v7L0 3.5z" fill="#333" /></svg>
              </HScrollButton>
              <HThumb><GripLines $vertical /></HThumb>
            </HScroll>
          </DocFrame>
        </DocArea>

        <Dock $right>
          <DockHead />
          <DockBody>
            <SelectBox $height={22} $wide><select aria-label="地址"><option> </option></select></SelectBox>
            <ListArea />
          </DockBody>
        </Dock>
      </Workspace>

      <StatusBar>
        <StatusCell $width={22} $dark>
          <svg width="19" height="21" viewBox="0 0 19 21" aria-hidden="true">
            <path d="M0 0h19v21H0z" fill="#000" />
            <path d="M0 0h18v19H0z" fill="#c8c8c8" />
            <path d="M0 5h17v11H0z" fill="#777" />
            <path d="M0 7.500h16M0 10.500h16M0 13.500h16" stroke="#fff" strokeWidth="2" strokeDasharray="3 1" />
          </svg>
        </StatusCell>
        <StatusCell $width={111} />
        <StatusCell $width={267} />
      </StatusBar>
      <DockTab />

      <Dialog role="dialog" aria-label="事件显示元件属性">
        <TitleBar>
          <Title>事件显示元件属性</Title>
          <CloseButton aria-label="关闭">
            <svg width="13" height="10" viewBox="0 0 13 10" aria-hidden="true">
              <path d="M3 1l7 8M10 1L3 9" stroke="#454a60" strokeWidth="5" />
              <path d="M3 1l7 8M10 1L3 9" stroke="#fff" strokeWidth="3" />
            </svg>
          </CloseButton>
        </TitleBar>
        <Client>
          <DialogTabs role="tablist">
            {tabs.map(([label, width]) => (
              <DialogTab key={label} role="tab" $width={width} $active={label === "字体"}>{label}</DialogTab>
            ))}
          </DialogTabs>
          <TabPage>
            <Group>
              <legend>属性</legend>
              <SizeRow>
                <label htmlFor="font-size"><span>尺寸</span><span>:</span></label>
                <SelectBox $height={20}>
                  <select id="font-size" defaultValue="17"><option>17</option><option>18</option></select>
                  <DownArrow />
                </SelectBox>
              </SizeRow>
              <ItalicRow><input type="checkbox" />斜体</ItalicRow>
            </Group>
          </TabPage>
          <Actions>
            <PushButton $primary>确定</PushButton>
            <PushButton>取消</PushButton>
            <PushButton $last>帮助</PushButton>
          </Actions>
        </Client>
      </Dialog>
    </Page>
  );
}
